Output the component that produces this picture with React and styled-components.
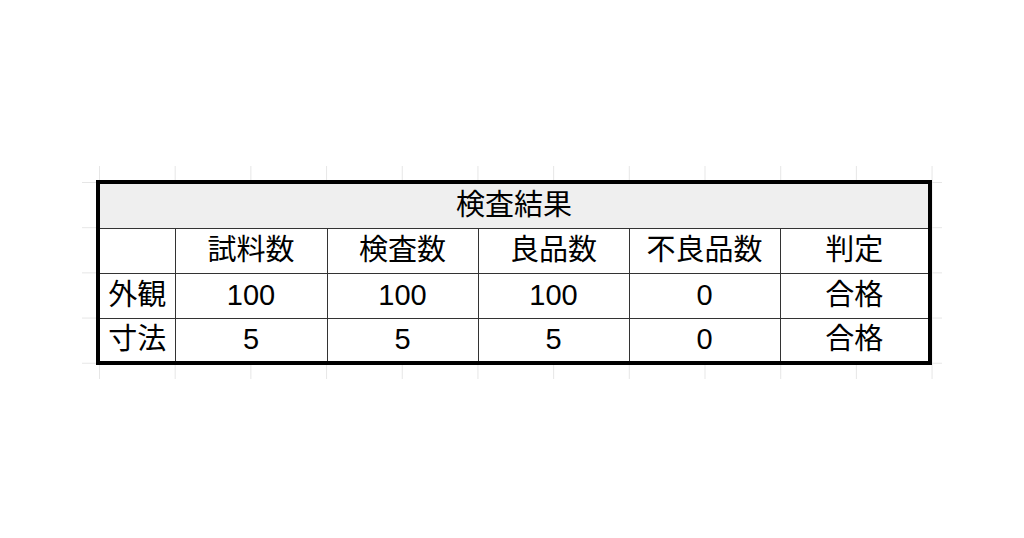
import React from 'react';
import styled, { createGlobalStyle } from 'styled-components';

const GlobalStyle = createGlobalStyle`
  html, body {
    margin: 0;
    padding: 0;
    background: #ffffff;
  }
  body {
    font-family: "Liberation Sans", "Noto Sans CJK JP", sans-serif;
    color: #000;
  }
`;

const Page = styled.div`
  width: 1024px;
  height: 538px;
  box-sizing: border-box;
  padding: 166px 0 0 82px;
  background: #ffffff;
`;

// faint spreadsheet gridlines peeking out around the table
const Sheet = styled.div`
  display: inline-block;
  padding: 14px 10px 14px 14px;
  background-color: #ffffff;
  background-image:
    linear-gradient(to right, #e6e6e6 1px, transparent 1px),
    linear-gradient(to bottom, #e6e6e6 1px, transparent 1px);
  background-size: 75.7px 100%, 100% 45.2px;
  background-position: 17px 0, 0 16px;
`;

const Table = styled.table`
  border-collapse: collapse;
  table-layout: fixed;
  width: 836px;
  border: 4px solid #000;
  background: #fff;
  font-size: 29px;
  line-height: 1;
`;

const Row = styled.tr`
  height: ${p => p.$h || 45}px;
`;

const Cell = styled.td`
  border: 1px solid #333;
  text-align: center;
  vertical-align: middle;
  padding: 0;
  background: ${p => (p.$shade ? '#efefef' : '#ffffff')};
  white-space: nowrap;
`;

const cols = ['試料数', '検査数', '良品数', '不良品数', '判定'];
const rows = [
  { label: '外観', values: ['100', '100', '100', '0', '合格'] },
  { label: '寸法', values: ['5', '5', '5', '0', '合格'] },
];

export default function App() {
  return (
    <>
      <GlobalStyle />
      <Page>
        <Sheet>
          <Table>
            <colgroup>
              <col style={{ width: 77 }} />
              <col style={{ width: 152 }} />
              <col style={{ width: 151 }} />
              <col style={{ width: 151 }} />
              <col style={{ width: 151 }} />
              <col />
            </colgroup>
            <tbody>
              <Row $h={46}>
                <Cell colSpan={6} $shade>検査結果</Cell>
              </Row>
              <Row>
                <Cell />
                {cols.map(c => (
                  <Cell key={c}>{c}</Cell>
                ))}
              </Row>
              {rows.map(r => (
                <Row key={r.label}>
                  <Cell>{r.label}</Cell>
                  {r.values.map((v, i) => (
                    <Cell key={i}>{v}</Cell>
                  ))}
                </Row>
              ))}
            </tbody>
          </Table>
        </Sheet>
      </Page>
    </>
  );
}
